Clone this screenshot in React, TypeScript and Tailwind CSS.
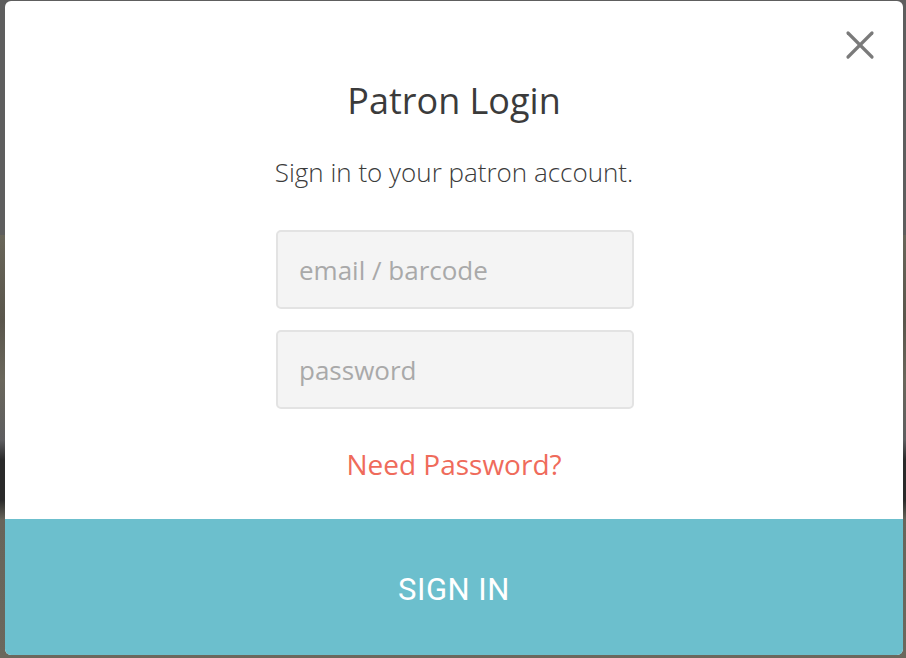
import { X } from 'lucide-react';

const App = () => {
  return (
    <div className="w-[906px] h-[658px] overflow-hidden bg-[linear-gradient(to_bottom,#5e5e5e_0px,#5e5e5e_235px,#69665a_235px,#5a564c_320px,#6a675c_380px,#5e5e60_440px,#2a2a2a_460px,#2a2a2a_500px,#68655a_520px,#6b685d_658px)] pt-px pl-[5px]">
      <div className="relative w-[898px] h-[654px] bg-white rounded-[6px] flex flex-col overflow-hidden">
        {/* close */}
        <button className="absolute top-[20px] right-[19px] text-[#7a7a7a]">
          <X size={48} strokeWidth={1.6} />
        </button>

        <div className="flex-1 flex flex-col items-center pt-[76px] font-['Open_Sans',sans-serif]">
          <h1 className="text-[36px] leading-[48px] text-[#3b3b3b]">Patron Login</h1>
          <p className="mt-[30px] text-[26px] leading-[34px] font-light text-[#3b3b3b]">
            Sign in to your patron account.
          </p>

          <div className="mt-[41px] ml-[2px] flex flex-col gap-[21px]">
            <input
              placeholder="email / barcode"
              className="w-[358px] h-[79px] bg-[#f4f4f4] border-2 border-[#e3e3e3] rounded-[5px] px-[21px] text-[26px] text-[#555] placeholder:text-[#a9a9a9] outline-none"
            />
            <input
              type="password"
              placeholder="password"
              className="w-[358px] h-[79px] bg-[#f4f4f4] border-2 border-[#e3e3e3] rounded-[5px] px-[21px] text-[26px] text-[#555] placeholder:text-[#a9a9a9] outline-none"
            />
          </div>

          <a href="#" className="mt-[36px] text-[28px] leading-[38px] text-[#ef6b5b]">
            Need Password?
          </a>
        </div>

        <button className="h-[136px] w-full pt-[6px] bg-[#6cbfcd] text-white text-[31px] font-['Roboto',sans-serif] tracking-[0.5px] flex items-center justify-center">
          SIGN IN
        </button>
      </div>
    </div>
  );
};

export default App;
